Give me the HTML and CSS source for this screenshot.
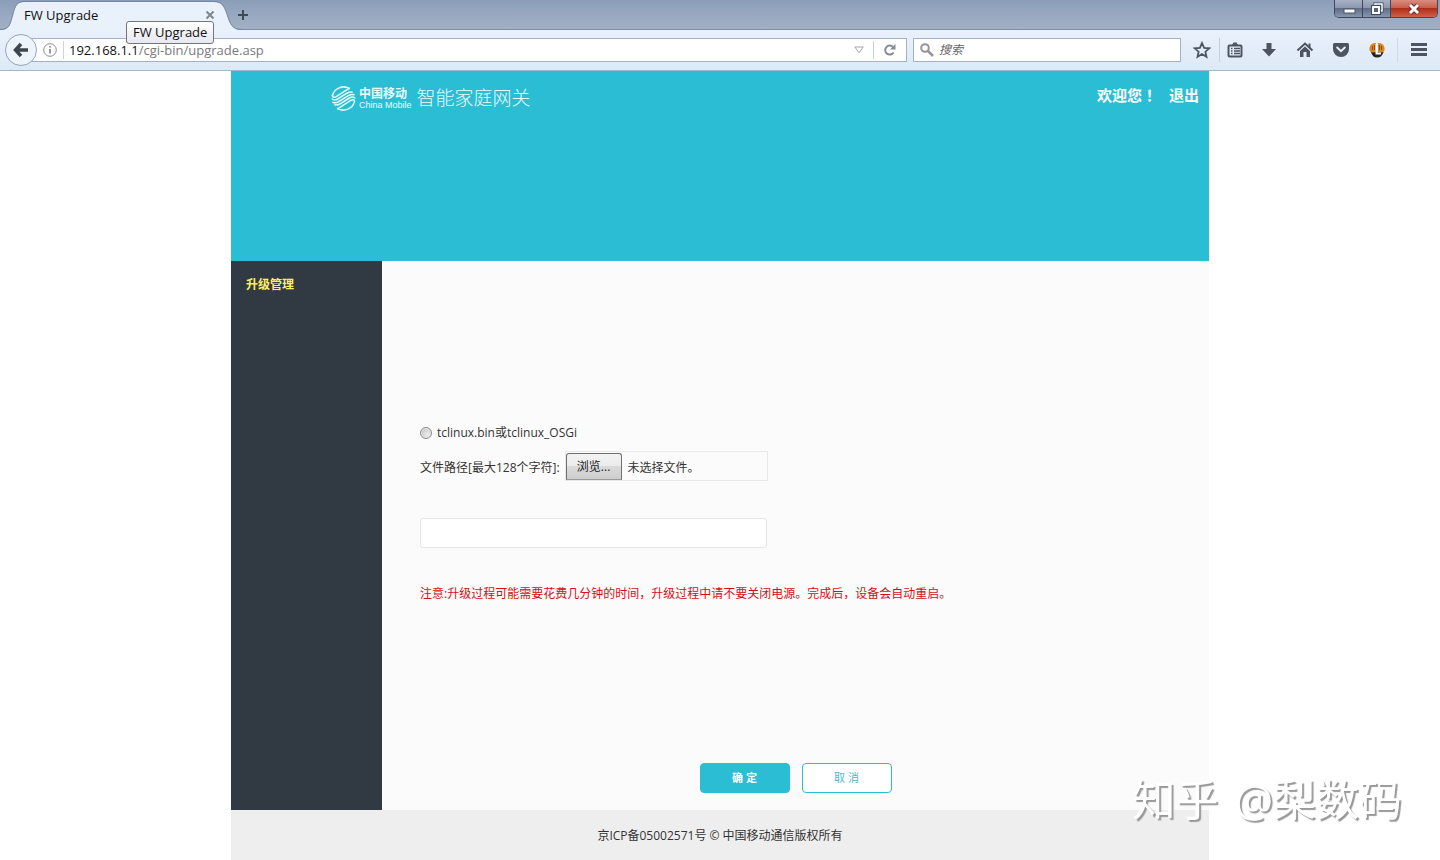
FILE: index.html
```html
<!DOCTYPE html>
<html lang="zh-CN">
<head>
<meta charset="utf-8">
<title>FW Upgrade</title>
<link rel="stylesheet" href="styles.css">
</head>
<body>
<div class="tabstrip">
  <div class="tab">
    <svg class="tab-shape" viewBox="0 0 244 30" aria-hidden="true">
      <path d="M0 30C10 30 10 24 13 14C15 6 17 2 24 2H214C222 2 224 6 227 14C230 24 232 30 242 30Z" fill="#e9f1fb"/>
      <path d="M0 29.500C10 29.500 10 24 13 14C15 6 17 1.500 24 1.500H214C222 1.500 224 6 227 14C230 24 232 29.500 242 29.500" fill="none" stroke="#7186a0"/>
    </svg>
    <span class="tab-title">FW Upgrade</span>
    <button class="tab-close" aria-label="关闭标签页"><svg width="10" height="10" viewBox="0 0 10 10"><path d="M1.500 1.500L8.500 8.500M8.500 1.500L1.500 8.500" stroke="#7d8793" stroke-width="2"/></svg></button>
    <span class="tooltip" role="tooltip">FW Upgrade</span>
  </div>
  <button class="new-tab" aria-label="新标签页"><svg width="12" height="12" viewBox="0 0 12 12"><path d="M6 1V11M1 6H11" stroke="#3f4a57" stroke-width="2"/></svg></button>
  <div class="window-controls">
    <button class="win" aria-label="最小化"><svg width="14" height="14" viewBox="0 0 14 14"><rect x="2" y="7" width="11" height="4" fill="#fff" stroke="#4c5667"/></svg></button>
    <button class="win" aria-label="还原"><svg width="14" height="14" viewBox="0 0 14 14"><path d="M5 4V2H12V9H10" fill="none" stroke="#3f495b" stroke-width="3"/><path d="M5 4V2H12V9H10" fill="none" stroke="#fff" stroke-width="1.500"/><rect x="3" y="5" width="6" height="6" fill="#56617a" stroke="#3f495b" stroke-width="4"/><rect x="3" y="5" width="6" height="6" fill="#56617a" stroke="#fff" stroke-width="2"/></svg></button>
    <button class="win win-close" aria-label="关闭"><svg width="14" height="14" viewBox="0 0 14 14"><path d="M3 3L11 11M11 3L3 11" stroke="#6a2b2b" stroke-width="5"/><path d="M3 3L11 11M11 3L3 11" stroke="#fff" stroke-width="3"/></svg></button>
  </div>
</div>

<div class="toolbar">
  <button class="back" aria-label="后退"><svg width="16" height="16" viewBox="0 0 16 16"><path d="M8 2L2.500 8L8 14M3 8H15" fill="none" stroke="#3f4650" stroke-width="3.500"/></svg></button>
  <div class="urlbar">
    <svg width="14" height="14" viewBox="0 0 14 14" aria-hidden="true"><circle cx="7" cy="7" r="6.300" fill="none" stroke="#8c8c8c"/><path d="M7 6V10.500M7 3V4.600" stroke="#777" stroke-width="1.500"/></svg>
    <a class="url" href="#"><span class="host">192.168.1.1</span>/cgi-bin/upgrade.asp</a>
    <button class="plain history" aria-label="历史"><svg width="10" height="8" viewBox="0 0 10 8"><path d="M.8 1H9.200L5 6.800Z" fill="none" stroke="#a5a5a5"/></svg></button>
    <button class="plain reload" aria-label="刷新"><svg width="14" height="14" viewBox="0 0 14 14"><path d="M10.500 9.500A4.500 4.500 0 1 1 10 4" fill="none" stroke="#858b92" stroke-width="2"/><path d="M12.500 1V6.500H7Z" fill="#858b92"/></svg></button>
  </div>
  <div class="searchbar">
    <svg width="14" height="14" viewBox="0 0 14 14" aria-hidden="true"><circle cx="5" cy="5" r="3.800" fill="none" stroke="#959595" stroke-width="2"/><path d="M8 8L13 13" stroke="#959595" stroke-width="2.500"/></svg>
    <input class="search" type="text" placeholder="搜索" aria-label="搜索">
  </div>
  <div class="tools">
    <button class="plain tool" aria-label="书签"><svg width="18" height="18" viewBox="0 0 18 18"><path d="M9 2L11.100 6.800L16.200 7.300L12.400 10.700L13.500 15.800L9 13.100L4.500 15.800L5.600 10.700L1.800 7.300L6.900 6.800Z" fill="none" stroke="#4c545f" stroke-width="1.800"/></svg></button>
    <button class="plain tool tool-list" aria-label="书签列表"><svg width="18" height="18" viewBox="0 0 18 18"><rect x="2.500" y="4.500" width="13" height="11" rx="1" fill="none" stroke="#4c545f" stroke-width="2"/><path d="M6 4L7.500 1.500H10.500L12 4Z" fill="#4c545f"/><path d="M5 7.500H6.500M8 7.500H14M5 10H6.500M8 10H14M5 12.500H6.500M8 12.500H14" stroke="#4c545f" stroke-width="1.300"/></svg></button>
    <button class="plain tool" aria-label="下载"><svg width="18" height="18" viewBox="0 0 18 18"><path d="M6.500 2H11.500V8H16L9 15.500L2 8H6.500Z" fill="#4c545f"/></svg></button>
    <button class="plain tool" aria-label="主页"><svg width="18" height="18" viewBox="0 0 18 18"><path d="M1.500 9.500L9 2.500L16.500 9.500" fill="none" stroke="#4c545f" stroke-width="2"/><path d="M12.500 2.500H14.500V7L12.500 5Z" fill="#4c545f"/><path d="M4 10L9 5.500L14 10V16H10.500V11H7.500V16H4Z" fill="#4c545f"/></svg></button>
    <button class="plain tool" aria-label="Pocket"><svg width="18" height="18" viewBox="0 0 18 18"><path d="M2.500 2H15.500Q17 2 17 3.500V8A8 8 0 0 1 1 8V3.500Q1 2 2.500 2Z" fill="#4c545f"/><path d="M5.200 6.500L9 10.200L12.800 6.500" fill="none" stroke="#e9f1fb" stroke-width="2" stroke-linecap="round"/></svg></button>
    <button class="plain tool" aria-label="扩展"><svg width="18" height="18" viewBox="0 0 18 18"><path d="M3 11H15.500Q14 16.500 9 16.500Q4.500 16.500 3 11Z" fill="#25211d"/><path d="M8 2C3.500 1.500 1 5 1.500 9Q2 11.500 5 11.500L8 11Z" fill="#d9861f"/><path d="M10 2C14.500 1.500 17 5 16.500 9Q16 11.500 13 11.500L10 11Z" fill="#d9861f"/><path d="M4.500 5V9M6.500 4V9M11.500 4V9M13.500 5V9" stroke="#8a4d12"/><path d="M8.500 3V12.500H13" fill="none" stroke="#fff" stroke-width="2"/></svg></button>
    <button class="plain tool tool-menu" aria-label="菜单"><svg width="18" height="18" viewBox="0 0 18 18"><path d="M1 3.500H17M1 8.500H17M1 13.500H17" stroke="#4c545f" stroke-width="3"/></svg></button>
  </div>
</div>

<div class="page">
  <header class="banner">
    <div class="brand">
      <svg width="25" height="25" viewBox="0 0 26 26" aria-hidden="true"><g fill="none" stroke="#e8fbfd" stroke-width="1.600" stroke-linecap="round" stroke-linejoin="round"><path d="M1.500 10A12 12 0 0 1 19 2.500M24.500 16A12 12 0 0 1 7 23.500"/><path d="M1.500 10Q2 13 5.500 11L15.500 4.500Q18 3 19 2.500"/><path d="M24.500 16Q24 13 20.500 15L10.500 21.500Q8 23 7 23.500"/><path d="M1.200 13.500Q3.500 15.500 7 13.500L16.500 7.500Q20 5.500 22 6.500"/><path d="M24.800 12.500Q22.500 10.500 19 12.500L9.500 18.500Q6 20.500 4 19.500"/><path d="M2 17Q5 18.200 8 16.300L18 10Q21 8.200 24 9"/></g></svg>
      <div class="operator"><span class="operator-cn">中国移动</span><span class="operator-en">China Mobile</span></div>
      <span class="product">智能家庭网关</span>
    </div>
    <div class="user"><span>欢迎您<span lang="zh-TW" class="mark">！</span></span><a href="#">退出</a></div>
  </header>

  <div class="body">
    <nav class="side"><a href="#">升级管理</a></nav>
    <form class="content">
      <label class="option"><input type="radio" name="image"><span>tclinux.bin或tclinux_OSGi</span></label>
      <div class="file-row">
        <label for="firmware">文件路径[最大128个字符]:</label>
        <div class="file-box">
          <input class="file-input" type="file" id="firmware">
          <button class="browse" type="button" onclick="document.getElementById('firmware').click()">浏览...</button>
          <span>未选择文件。</span>
        </div>
      </div>
      <input class="progress" type="text" aria-label="升级进度" readonly>
      <p class="notice">注意:升级过程可能需要花费几分钟的时间，升级过程中请不要关闭电源。完成后，设备会自动重启。</p>
      <div class="actions">
        <button class="btn btn-ok" type="button">确 定</button>
        <button class="btn btn-cancel" type="reset">取 消</button>
      </div>
    </form>
  </div>

  <footer class="footer">京ICP备05002571号 © 中国移动通信版权所有</footer>
</div>
<div class="watermark"><span>知乎</span><span>@梨数码</span></div>
</body>
</html>
```
FILE: styles.css
```css
* { box-sizing: border-box; }

body {
  margin: 0;
  min-height: 100vh;
  display: flex;
  flex-direction: column;
  background: #fff;
  color: #333;
  font: 12px/20px "Open Sans", "Noto Sans CJK SC", sans-serif;
}

button, input { font: inherit; color: inherit; }
button { padding: 0; }
a { color: inherit; text-decoration: none; }
svg { display: block; flex: none; }

/* Browser window */
.tabstrip {
  display: flex;
  height: 30px;
  background: linear-gradient(#8c9db8 0, #97a8c0 50%, #a3b0c4 100%);
  border-bottom: 1px solid #7b8da6;
}

.tab {
  position: relative;
  display: flex;
  align-items: center;
  width: 232px;
  padding: 0 16px 0 24px;
  color: #111;
}

.tab-shape { position: absolute; left: 0; top: 0; width: 244px; height: 30px; }
.tab-title { position: relative; flex: 1; font-size: 13px; }

.tab-close, .new-tab, .plain, .win {
  display: flex;
  align-items: center;
  justify-content: center;
  border: 0;
  background: none;
}

.tab-close { position: relative; width: 12px; height: 12px; }
.new-tab { width: 22px; height: 30px; }

.tooltip {
  position: absolute;
  z-index: 2;
  left: 126px;
  top: 21px;
  padding: 0 6px;
  border: 1px solid #767676;
  border-radius: 3px;
  background: linear-gradient(#fff, #e6e7f1);
  font-size: 13px;
  line-height: 21px;
  white-space: nowrap;
}

.window-controls {
  display: flex;
  height: 18px;
  margin: 0 2px 0 auto;
  border: 1px solid #3f4758;
  border-top: 0;
  border-radius: 0 0 5px 5px;
  overflow: hidden;
}

.win {
  width: 28px;
  border-right: 1px solid #3f4758;
  background: linear-gradient(#a7b1c4 0, #8c98ae 45%, #5f6d87 50%, #8797b0 100%);
}

.win-close {
  width: 46px;
  border-right: 0;
  background: linear-gradient(#d98d80 0, #c8604c 45%, #b02e17 50%, #cf6048 100%);
}

.toolbar {
  display: flex;
  align-items: center;
  height: 41px;
  padding-left: 5px;
  background: linear-gradient(#e9f1fb, #dde9f6);
  border-bottom: 1px solid #a3b7cc;
}

.back {
  z-index: 1;
  display: flex;
  align-items: center;
  justify-content: center;
  width: 32px;
  height: 32px;
  border: 1px solid #93a5bb;
  border-radius: 50%;
  background: #eef4fc;
}

.urlbar, .searchbar {
  display: flex;
  align-items: center;
  height: 24px;
  border: 1px solid #a1b2c5;
  background: #fff;
}

.urlbar { flex: 1; margin-left: -10px; padding-left: 15px; }

.url {
  flex: 1;
  margin-left: 6px;
  padding-left: 5px;
  border-left: 1px solid #d3d3d3;
  color: #7a7a7a;
  font-size: 13px;
  line-height: 18px;
}

.host { color: #111; }
.history { width: 24px; height: 18px; margin-right: 2px; }
.reload { width: 33px; height: 18px; border-left: 1px solid #c9d1da; }

.searchbar { width: 268px; margin-left: 6px; padding-left: 6px; }

.search {
  flex: 1;
  min-width: 0;
  margin-left: 5px;
  padding: 0;
  border: 0;
  outline: 0;
  background: none;
  font-style: italic;
}

.search::placeholder { color: #666; }

.tools { display: flex; margin-left: 4px; }
.tool { width: 36px; height: 24px; }
.tool:first-child { width: 34px; }
.tool-list { width: 30px; border-left: 1px solid #c5cfda; margin-right: 2px; }
.tool-menu { width: 43px; margin-left: 2px; border-left: 1px solid #cfdae7; }

/* Gateway page */
.page {
  flex: 1;
  display: flex;
  flex-direction: column;
  width: 100%;
  max-width: 978px;
  margin: 0 auto;
}

.banner {
  display: flex;
  justify-content: space-between;
  align-items: flex-start;
  height: 190px;
  padding: 13px 10px 0 100px;
  background: #2bbdd4;
  color: #fff;
}

.brand { display: flex; align-items: center; height: 28px; color: #e8fbfd; }

.operator { display: flex; flex-direction: column; margin: 0 5px 0 3px; }
.operator-cn { font-size: 12px; font-weight: 700; line-height: 13px; }
.operator-en { font: 9px/10px "Liberation Sans", sans-serif; }
.product { font-size: 19px; font-weight: 300; line-height: 28px; }

.user { display: flex; gap: 12px; font-size: 15px; font-weight: 700; line-height: 22px; }
.mark { font-family: "Noto Sans CJK TC", sans-serif; }

.body { flex: 1; display: flex; }

.side {
  width: 151px;
  padding: 14px 15px;
  background: #313a43;
  color: #ffee66;
  font-weight: 700;
}

.content {
  flex: 1;
  display: flex;
  flex-direction: column;
  align-items: flex-start;
  padding: 162px 38px 17px;
  background: #fbfbfb;
}

.option { display: flex; align-items: center; gap: 5px; }

.option input {
  appearance: none;
  width: 12px;
  height: 12px;
  margin: 0;
  border: 1px solid #8a8a8a;
  border-radius: 50%;
  background: radial-gradient(circle at 65% 65%, #eee, #b8b8b8);
  box-shadow: inset 0 0 0 1px #eee;
}

.file-row { display: flex; align-items: center; gap: 5px; margin-top: 8px; line-height: 22px; }
.file-row label, .file-box span { padding-top: 3px; }

.file-box {
  position: relative;
  display: flex;
  align-items: flex-end;
  gap: 6px;
  width: 203px;
  height: 30px;
  border: 1px solid #e8e8e8;
}

.file-box span { align-self: center; }
.file-input { position: absolute; width: 1px; height: 1px; opacity: 0; }

.browse {
  width: 56px;
  height: 27px;
  padding-top: 1px;
  border: 1px solid #707070;
  border-bottom-color: #999;
  border-radius: 3px 3px 0 0;
  background: linear-gradient(#f3f3f3 0, #ebebeb 48%, #dadada 50%, #cdcdcd 100%);
  color: #222;
}

.progress {
  width: 347px;
  height: 30px;
  margin-top: 37px;
  padding: 0 8px;
  border: 1px solid #e5e5e5;
  border-radius: 3px;
  background: #fff;
}

.notice { margin: 36px 0 0; color: #d40f14; }

.actions { display: flex; align-self: center; gap: 12px; margin-top: auto; }

.btn {
  width: 90px;
  height: 30px;
  border: 1px solid #2bbdd4;
  border-radius: 4px;
  font-size: 11px;
}

.btn-ok { background: #2bbdd4; color: #fff; font-weight: 700; }
.btn-cancel { background: #fff; color: #4bb9c9; }

.footer {
  height: 50px;
  background: #eee;
  line-height: 52px;
  text-align: center;
}

.watermark {
  position: fixed;
  right: 38px;
  bottom: 30px;
  display: flex;
  gap: 16px;
  color: #fff;
  font-size: 43px;
  line-height: 60px;
  text-shadow: 2px 2px 1px #999;
  white-space: nowrap;
}
```
